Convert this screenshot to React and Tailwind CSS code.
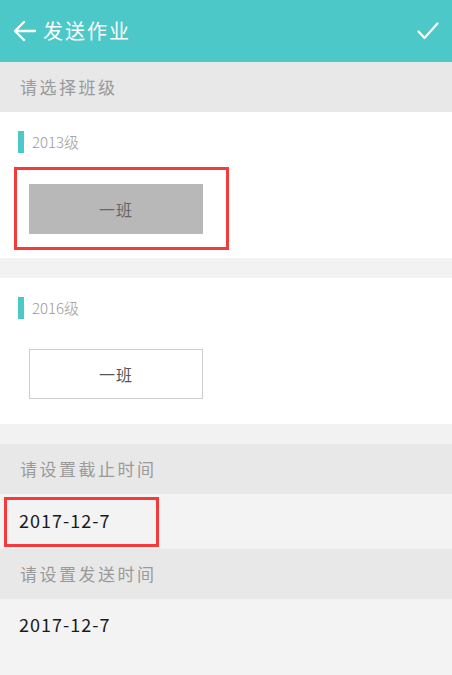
import React from 'react';

const cjk = { fontFamily: '"Noto Sans CJK SC", "Noto Sans", sans-serif' };

function SectionTitle({ children }) {
	return (
		<div className="h-[50px] bg-[#e8e8e8] flex items-center pl-[20px] text-[17px] tracking-[2.5px] text-[#9a9a9a]">
			{children}
		</div>
	);
}

function GradeLabel({ children }) {
	return (
		<div className="flex items-center h-[22px] pl-[18px]">
			<div className="w-[6px] h-[22px] bg-[#4cc8c8]" />
			<span className="ml-[8px] text-[15px] font-light text-[#9a9a9a]">{children}</span>
		</div>
	);
}

function DateRow({ value, marked }) {
	if (marked) {
		return (
			<div className="h-[55px] bg-[#f3f3f3] flex items-center pl-[4px]">
				<div className="w-[155px] h-[50px] border-[3px] border-[#f43a3a] flex items-center pl-[12px] pb-[2px] text-[18px] tracking-[1px] text-[#1a1a1a]">
					{value}
				</div>
			</div>
		);
	}
	return (
		<div className="h-[50px] bg-[#f3f3f3] flex items-center pl-[19px] text-[18px] tracking-[1px] text-[#1a1a1a]">
			{value}
		</div>
	);
}

export default function App() {
	return (
		<div className="min-h-screen bg-[#f3f3f3]" style={cjk}>
			<div className="h-[62px] bg-[#4cc8c8] flex items-center justify-between px-[13px]">
				<div className="flex items-center">
					<svg width="24" height="22" viewBox="0 0 24 22" fill="none" stroke="white" strokeWidth="2.4" strokeLinecap="round" strokeLinejoin="round">
						<path d="M22 11H2.5M11 2L2 11l9 9" />
					</svg>
					<span className="ml-[6px] text-[20px] tracking-[2px] text-white">发送作业</span>
				</div>
				<svg width="22" height="18" viewBox="0 0 22 18" fill="none" stroke="white" strokeWidth="2.2" strokeLinecap="round" strokeLinejoin="round">
					<path d="M1.5 9.5l6 6.5L20.5 1.5" />
				</svg>
			</div>

			<SectionTitle>请选择班级</SectionTitle>

			<div className="bg-white pt-[19px] pb-[8px]">
				<GradeLabel>2013级</GradeLabel>
				<div className="ml-[14px] mt-[14px] w-[215px] h-[83px] border-[3px] border-[#f43a3a] pl-[12px] pt-[14px]">
					<div className="w-[174px] h-[50px] bg-[#b8b8b8] flex items-center justify-center text-[16px] tracking-[1px] text-[#666]">
						一班
					</div>
				</div>
			</div>

			<div className="h-[20px] bg-[#f2f2f2]" />

			<div className="bg-white pt-[19px] pb-[25px]">
				<GradeLabel>2016级</GradeLabel>
				<div className="ml-[29px] mt-[30px] w-[174px] h-[50px] border border-[#cccccc] flex items-center justify-center text-[16px] tracking-[1px] text-[#555]">
					一班
				</div>
			</div>

			<div className="h-[20px] bg-[#f2f2f2]" />

			<SectionTitle>请设置截止时间</SectionTitle>
			<DateRow value="2017-12-7" marked />
			<SectionTitle>请设置发送时间</SectionTitle>
			<DateRow value="2017-12-7" />
		</div>
	);
}
